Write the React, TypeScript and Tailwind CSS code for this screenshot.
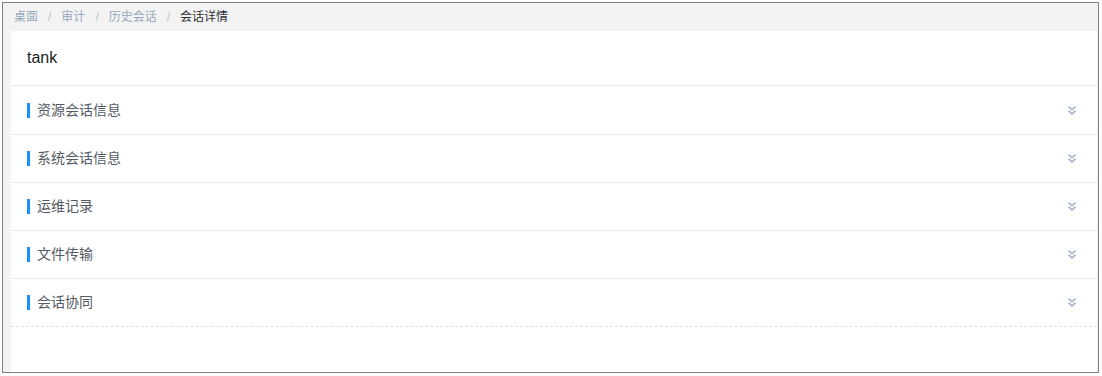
const sections = ["资源会话信息", "系统会话信息", "运维记录", "文件传输", "会话协同"];

function DoubleDown() {
  return (
    <svg width="10" height="11" viewBox="0 0 10 11" fill="none" stroke="#a3abc2" strokeWidth="1.5">
      <path d="M1.5 1.5 L5 4.8 L8.5 1.5" />
      <path d="M1.5 5.8 L5 9.1 L8.5 5.8" />
    </svg>
  );
}

export default function App() {
  return (
    <div
      className="w-[1102px] h-[376px] bg-white p-[2px] pr-[3px] pb-[3px]"
      style={{ fontFamily: '"Liberation Sans", Arial, "Noto Sans CJK SC", sans-serif' }}
    >
      <div className="h-full border border-[#808080] bg-[#f3f3f3] pl-[8px] pr-[1px] flex flex-col">
        <div className="h-[28px] flex items-center pl-[3px] text-[12px]">
          <span className="text-[#97a8be]">桌面</span>
          <span className="text-[#c0c4cc] mx-[10px]">/</span>
          <span className="text-[#97a8be]">审计</span>
          <span className="text-[#c0c4cc] mx-[10px]">/</span>
          <span className="text-[#97a8be]">历史会话</span>
          <span className="text-[#c0c4cc] mx-[10px]">/</span>
          <span className="text-[#303133]">会话详情</span>
        </div>
        <div className="flex-1 bg-white">
          <div className="h-[55px] border-b border-[#e4e7ed] flex items-center pl-4 text-[16px] text-[#222]">
            tank
          </div>
          {sections.map((s, i) => (
            <div
              key={s}
              className={
                "flex items-center justify-between pl-4 pr-[20px] border-b " +
                (i === 0 ? "h-[49px] " : "h-[48px] ") +
                (i === sections.length - 1 ? "border-dashed border-[#dcdfe6]" : "border-[#e4e7ed]")
              }
            >
              <div className="flex items-center">
                <span className="w-[3px] h-[15px] bg-[#1890ff] mr-[7px]" />
                <span className="text-[14px] text-[#555a64]">{s}</span>
              </div>
              <DoubleDown />
            </div>
          ))}
        </div>
      </div>
    </div>
  );
}
